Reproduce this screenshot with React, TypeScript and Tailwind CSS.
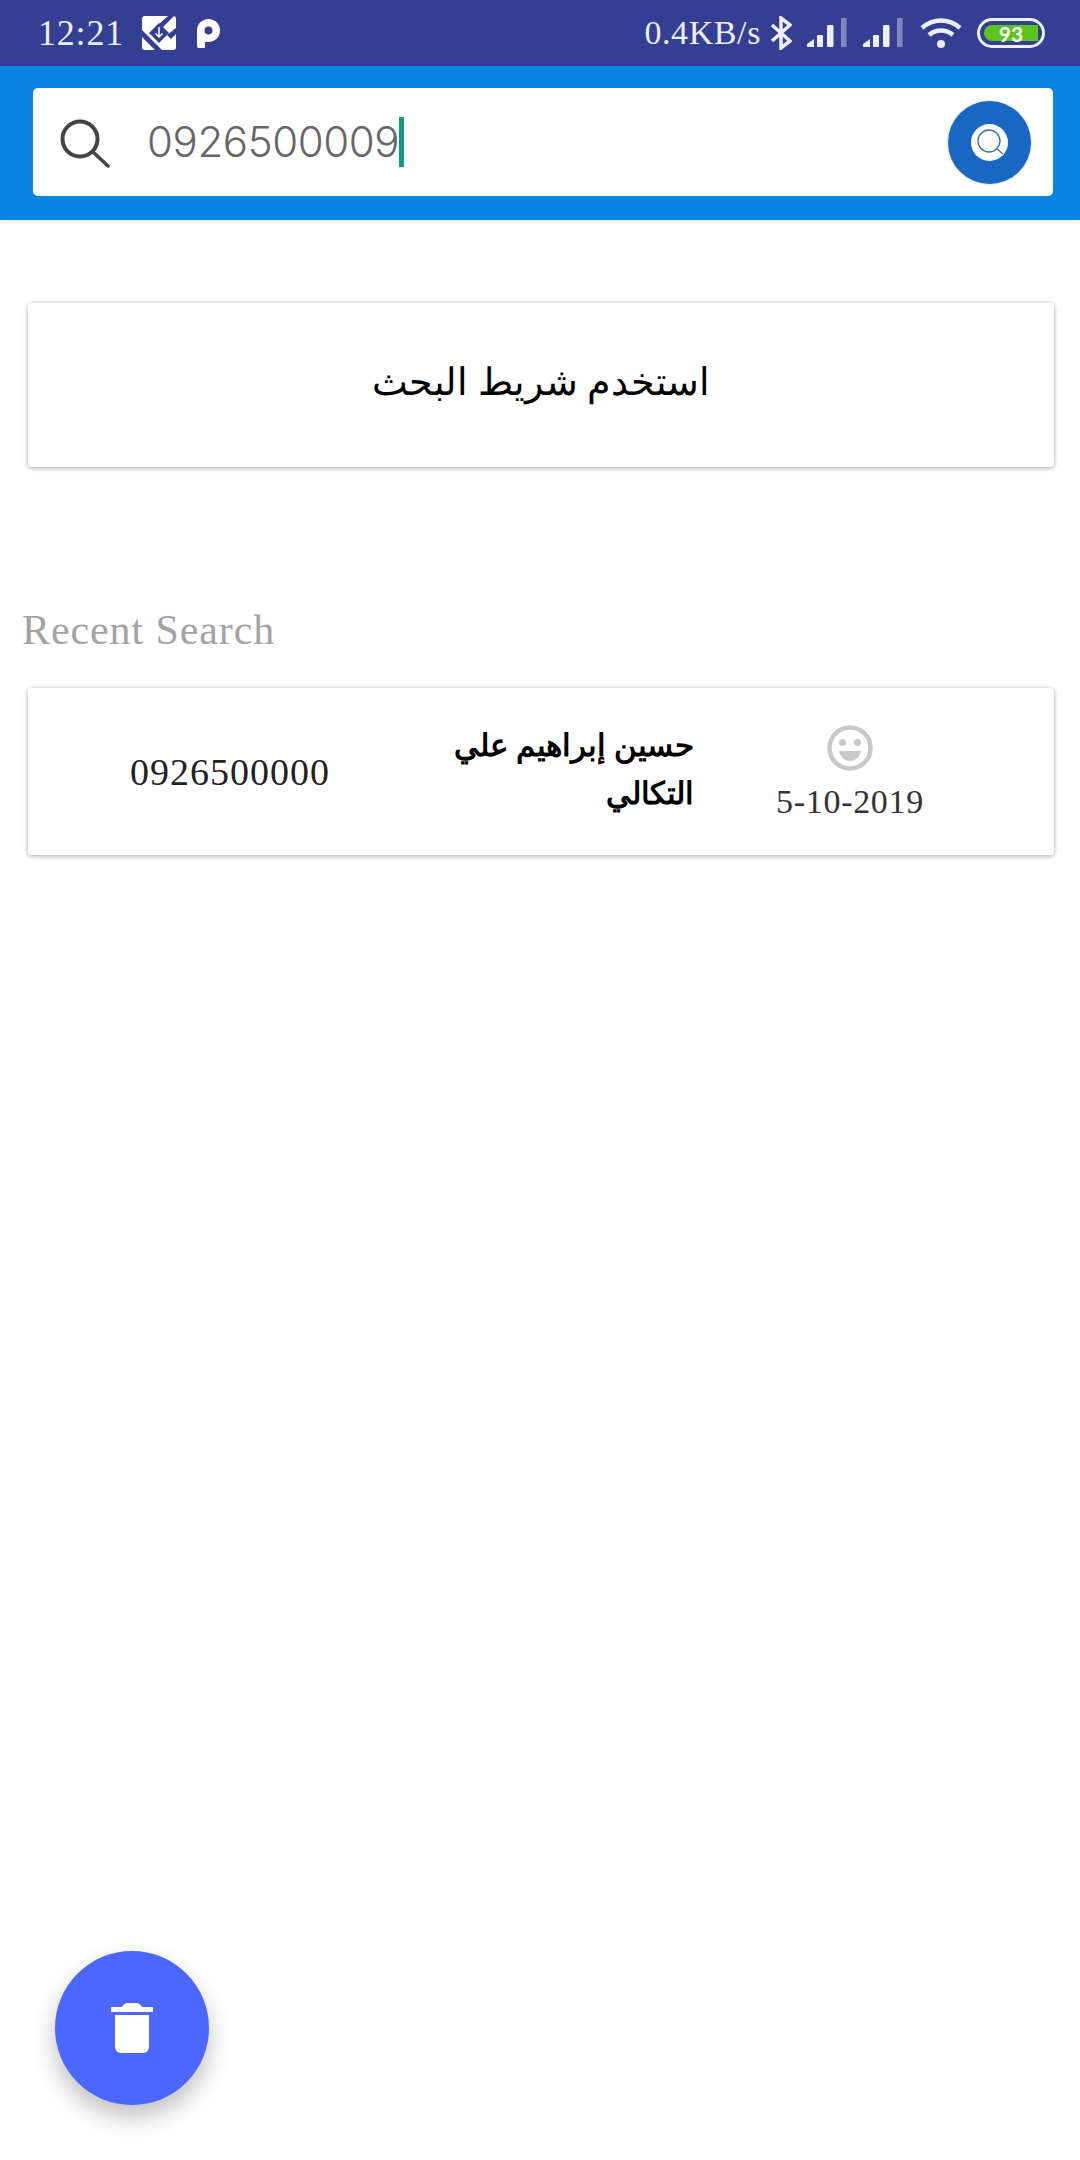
const serif = "font-['Liberation_Serif',serif]"

function Signal() {
  return (
    <svg width="40" height="30" viewBox="0 0 40 30" fill="#eceefa">
      <path d="M0 29v-3l7-5v8z" />
      <rect x="10" y="17" width="6" height="12" rx="1" />
      <rect x="20" y="7" width="6.500" height="22" rx="1" />
      <rect x="34" y="0" width="5.500" height="29" fill="#7f88bd" />
    </svg>
  )
}

function StatusBar() {
  return (
    <div className="h-[66px] bg-[#343f93] flex items-center justify-between pl-[38px] pr-[35px] text-[#eceefa]">
      <div className="flex items-center">
        <span className={`${serif} text-[36px] leading-none tracking-[0.8px] w-[104px]`}>12:21</span>
        <svg width="34" height="34" viewBox="0 0 34 34">
          <rect width="34" height="34" rx="3" fill="#fff" />
          <path d="M17 7l10 10-10 10L7 17z" fill="#343f93" />
          <path d="M0 14L20 34H13L0 21zM26 0h6L20 12 16 9zM29 23l5-5v-6l-9 7z" fill="#343f93" />
          <path d="M17 11v10M13.500 17.500l3.500 3.500 3.500-3.500" stroke="#fff" strokeWidth="1.500" fill="none" />
        </svg>
        <svg className="ml-[21px]" width="23" height="29" viewBox="0 0 23 29">
          <path fillRule="evenodd" d="M0 11.500C0 5 5 0 11.500 0S23 5 23 11.500 18 23 11.500 23H8v6H2A2 2 0 0 1 0 27zM11.500 7.500a4 4 0 1 0 0 8 4 4 0 0 0 0-8z" fill="#fff" />
        </svg>
      </div>
      <div className="flex items-center">
        <span className={`${serif} text-[34px] leading-none tracking-[0.6px]`}>0.4KB/s</span>
        <svg className="ml-[9px]" width="22" height="34" viewBox="0 0 22 34" fill="none" stroke="#eceefa" strokeWidth="3.500">
          <path d="M2 9l18 16-9 7V2l9 7L2 25" />
        </svg>
        <div className="ml-[15px] flex items-center gap-[16px]">
          <Signal />
          <Signal />
        </div>
        <svg className="ml-[17px]" width="42" height="32" viewBox="0 0 42 32" fill="none" stroke="#eceefa" strokeWidth="4.500">
          <path d="M2 11c11-10 27-10 38 0" />
          <path d="M9 18c7-6 17-6 24 0" />
          <circle cx="21" cy="27" r="4" fill="#eceefa" stroke="none" />
        </svg>
        <div className="ml-[15px] w-[68px] h-[30px] rounded-full border-[3px] border-[#eceefa] p-[4px] flex">
          <div className="flex-1 rounded-l-full rounded-r-[10px] bg-[#5cc51c] flex items-center justify-center text-white text-[21px] leading-none font-bold font-['Lato',sans-serif]">
            93
          </div>
        </div>
      </div>
    </div>
  )
}

function SearchBar() {
  return (
    <div className="h-[154px] bg-[#0a84e3] pt-[22px] pl-[33px] pr-[27px] shadow-[0_1px_3px_rgba(0,0,0,0.15)]">
      <div className="h-[108px] bg-white rounded-[5px] flex items-center pl-[27px] pr-[22px]">
        <svg width="50" height="50" viewBox="0 0 50 50" fill="none" stroke="#444" strokeWidth="4" strokeLinecap="round" className="shrink-0 mt-[3px]">
          <circle cx="20" cy="20" r="17.500" />
          <path d="M33 33l15 14" strokeWidth="3.500" />
        </svg>
        <div className="ml-[37px] flex-1 flex items-center">
          <span className="font-['Inter',sans-serif] font-light text-[42px] tracking-[-0.4px] leading-none text-[#666]">0926500009</span>
          <span className="w-[5px] h-[50px] bg-[#129a85]" />
        </div>
        <div className="w-[83px] h-[83px] rounded-full bg-[#1767c3] flex items-center justify-center shadow-[0_0_3px_rgba(0,0,0,0.2)]">
          <div className="w-[37px] h-[37px] rounded-full bg-white flex items-center justify-center">
            <svg width="30" height="30" viewBox="0 0 30 30" fill="none" stroke="#3d6cae" strokeWidth="1.300">
              <circle cx="14" cy="14" r="11" />
              <path d="M22 22l6 5" />
            </svg>
          </div>
        </div>
      </div>
    </div>
  )
}

export default function App() {
  return (
    <div className="relative w-[1080px] h-[2160px] bg-white overflow-hidden">
      <StatusBar />
      <SearchBar />

      <div className="mt-[83px] ml-[28px] mr-[26px] h-[164px] rounded-[4px] bg-white shadow-[0_1px_5px_rgba(0,0,0,0.35)] flex items-center justify-center pb-[6px]">
        <span dir="rtl" className="font-['Liberation_Serif',serif] text-[38px] leading-none text-black">
          استخدم شريط البحث
        </span>
      </div>

      <div className={`mt-[140px] ml-[22px] ${serif} text-[42px] leading-[46px] tracking-[0.9px] text-[#a3a3a3]`}>Recent Search</div>

      <div className="mt-[35px] ml-[28px] mr-[26px] h-[167px] rounded-[4px] bg-white shadow-[0_1px_5px_rgba(0,0,0,0.35)] flex items-center">
        <div className={`w-[404px] text-center ${serif} text-[38px] leading-none tracking-[1px] text-[#222]`}>0926500000</div>
        <div dir="rtl" className="w-[262px] font-['Liberation_Serif',serif] font-bold text-[30.500px] leading-[48px] -mt-[4px] text-black">
          حسين إبراهيم علي التكالي
        </div>
        <div className="ml-[59px] w-[194px] flex flex-col items-center">
          <svg width="46" height="46" viewBox="0 0 46 46">
            <circle cx="23" cy="23" r="20.500" fill="none" stroke="#c8c8c8" strokeWidth="4.500" />
            <circle cx="15.500" cy="17.500" r="3.500" fill="#c8c8c8" />
            <circle cx="30.500" cy="17.500" r="3.500" fill="#c8c8c8" />
            <path d="M12 26h22c-1 6-6 10-11 10s-10-4-11-10z" fill="#c8c8c8" />
          </svg>
          <div className={`mt-[14px] ${serif} text-[34px] leading-none tracking-[0.7px] text-[#333]`}>5-10-2019</div>
        </div>
      </div>

      <button className="absolute left-[55px] top-[1951px] w-[154px] h-[154px] rounded-full bg-[#4b67ff] flex items-center justify-center shadow-[0_12px_24px_rgba(0,0,0,0.25)]">
        <svg width="42" height="50" viewBox="0 0 42 50" fill="#fff">
          <path d="M0 4h11c1-2 3-4 6-4h8c3 0 5 2 6 4h11v5H0z" />
          <path d="M4 12h34v32a6 6 0 0 1-6 6H10a6 6 0 0 1-6-6z" />
        </svg>
      </button>
    </div>
  )
}
